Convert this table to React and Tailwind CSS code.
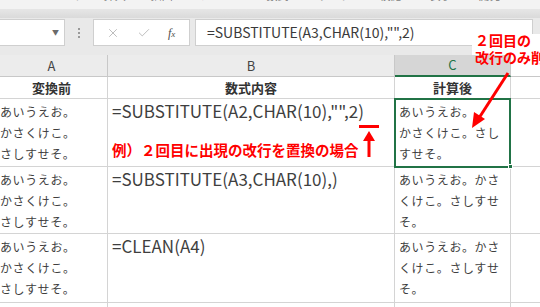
import { X, Check } from "lucide-react";

const jp = "font-['Noto_Sans_CJK_JP','Noto_Sans',sans-serif]";

const tabs = [
  { label: "ファイル", cls: "ml-[-30px]" },
  { label: "ホーム", cls: "ml-[32px]" },
  { label: "挿入", cls: "ml-[25px]" },
  { label: "描画", cls: "ml-[25px]" },
  { label: "ページ", cls: "ml-[6px]" },
  { label: "数式", cls: "ml-[55px]" },
  { label: "データ", cls: "ml-[30px]" },
  { label: "校閲", cls: "ml-[28px]" },
  { label: "表示", cls: "ml-[28px]" },
  { label: "開発", cls: "ml-[27px]" },
  { label: "ヘルプ", cls: "ml-[38px]" },
];

const abc = ["あいうえお。", "かさくけこ。", "さしすせそ。"];

const rows = [
  {
    h: "h-[68px]",
    b: "=SUBSTITUTE(A2,CHAR(10),\"\",2)",
    note: "例）２回目に出現の改行を置換の場合",
    c: ["あいうえお。", "かさくけこ。さし", "すせそ。"],
  },
  {
    h: "h-[67px]",
    b: "=SUBSTITUTE(A3,CHAR(10),)",
    c: ["あいうえお。かさ", "くけこ。さしすせ", "そ。"],
  },
  {
    h: "h-[69px]",
    b: "=CLEAN(A4)",
    c: ["あいうえお。かさ", "くけこ。さしすせ", "そ。"],
  },
];

function Lines({ lines }) {
  return (
    <div className="pl-[4px] pt-[2px] text-[12px] leading-[21px] tracking-[0.6px] text-[#3f3f3f]">
      {lines.map((l, i) => (
        <div key={i} className="whitespace-nowrap">
          {l}
        </div>
      ))}
    </div>
  );
}

export default function App() {
  return (
    <div className={`relative w-[540px] h-[307px] overflow-hidden bg-white ${jp}`}>
      {/* ribbon tabs (cut off) */}
      <div className="h-[9px] overflow-hidden bg-[#f3f3f3]">
        <div className="flex mt-[-13px] text-[11px] leading-[16px] text-[#7a7a7a] whitespace-nowrap">
          {tabs.map((t) => (
            <span key={t.label} className={t.cls}>
              {t.label}
            </span>
          ))}
        </div>
      </div>
      <div className="h-[9px] bg-gradient-to-b from-[#e6e6e6] to-[#dadada]" />

      {/* formula bar */}
      <div className="h-[37px] bg-[#e9e9e9] pt-[1px]">
        <div className="flex h-[27px] items-stretch">
          <div className="w-[65px] bg-white border border-l-0 border-[#cfcfcf] flex items-center justify-end pr-[5px]">
            <span className="text-[7px] text-[#6b6b6b]">▼</span>
          </div>
          <div className="w-[28px] flex flex-col items-center justify-center gap-[2px]">
            <span className="w-[2px] h-[2px] bg-[#9a9a9a]" />
            <span className="w-[2px] h-[2px] bg-[#9a9a9a]" />
            <span className="w-[2px] h-[2px] bg-[#9a9a9a]" />
          </div>
          <div className="w-[97px] bg-white border border-[#cfcfcf] flex items-center pl-[12px] gap-[17px]">
            <X size={14} strokeWidth={1.5} className="text-[#b3b3b3]" />
            <Check size={14} strokeWidth={1.5} className="text-[#b3b3b3]" />
            <span className="font-['Liberation_Serif',serif] italic text-[12px] text-[#4d4d4d]">
              f<span className="text-[9px]">x</span>
            </span>
          </div>
          <div className="ml-[5px] w-[338px] bg-white border border-[#cfcfcf] flex items-center pl-[11px] text-[14px] text-[#3a3a3a] whitespace-nowrap">
            =SUBSTITUTE(A3,CHAR(10),"",2)
          </div>
        </div>
      </div>

      {/* grid */}
      <div className="ml-[-4px] w-[560px]">
        {/* column headers */}
        <div className="grid grid-cols-[112px_287px_116px_45px] h-[22px] text-[13px] text-[#444]">
          <div className="bg-[#ececec] border-r border-b border-[#c8c8c8] flex items-center justify-center">A</div>
          <div className="bg-[#ececec] border-r border-b border-[#c8c8c8] flex items-center justify-center">B</div>
          <div className="bg-[#d6d6d6] border-r border-[#c8c8c8] border-b-2 border-b-[#217346] text-[#217346] flex items-center justify-center">
            C
          </div>
          <div className="bg-white border-b border-[#c8c8c8]" />
        </div>

        {/* row 1: titles */}
        <div className="grid grid-cols-[112px_287px_116px_45px] h-[22px] text-[13px] font-bold text-[#333]">
          <div className="border-r border-b border-[#d4d4d4] flex items-center justify-center">変換前</div>
          <div className="border-r border-b border-[#d4d4d4] flex items-center justify-center">数式内容</div>
          <div className="border-r border-b border-[#d4d4d4] flex items-center justify-center">計算後</div>
          <div className="border-b border-[#d4d4d4]" />
        </div>

        {rows.map((r, i) => (
          <div key={i} className={`grid grid-cols-[112px_287px_116px_45px] ${r.h}`}>
            <div className="border-r border-b border-[#d4d4d4]">
              <Lines lines={abc} />
            </div>
            <div className="border-r border-b border-[#d4d4d4] pl-[4px] flex flex-col">
              <div className="text-[17px] leading-[21px] pt-[1px] text-[#3f3f3f] whitespace-nowrap">{r.b}</div>
              {r.note && (
                <div className="mt-[20px] text-[14.5px] leading-[18px] font-bold text-[#ff0000] whitespace-nowrap">
                  {r.note}
                </div>
              )}
            </div>
            <div className="border-r border-b border-[#d4d4d4]">
              <Lines lines={r.c} />
            </div>
            <div className="border-b border-[#d4d4d4]" />
          </div>
        ))}
        <div className="grid grid-cols-[112px_287px_116px_45px] h-[10px]">
          <div className="border-r border-[#d4d4d4]" />
          <div className="border-r border-[#d4d4d4]" />
          <div className="border-r border-[#d4d4d4]" />
          <div />
        </div>
      </div>

      {/* selected cell C2 */}
      <div className="absolute left-[394px] top-[98px] w-[117px] h-[70px] border-2 border-[#217346]" />
      <div className="absolute left-[508px] top-[164px] w-[5px] h-[5px] bg-[#217346] border border-white" />

      {/* annotation top right */}
      <div className="absolute left-[472px] top-[34px] w-[68px] h-[21px] bg-white" />
      <div className="absolute left-[475px] top-[32px] text-[14px] leading-[17px] font-bold text-[#ff0000] whitespace-nowrap">
        <div>２回目の</div>
        <div>改行のみ削除</div>
      </div>

      {/* arrows */}
      <svg className="absolute left-0 top-0" width="540" height="307">
        <line x1="508" y1="73" x2="479" y2="118" stroke="#ff0000" strokeWidth="3" />
        <polygon points="472,128 474,112 485,119" fill="#ff0000" />
        <rect x="359" y="125" width="20" height="3" fill="#ff0000" />
        <polygon points="369,131 363,141 375,141" fill="#ff0000" />
        <rect x="367.5" y="139" width="3" height="18" fill="#ff0000" />
      </svg>
    </div>
  );
}
